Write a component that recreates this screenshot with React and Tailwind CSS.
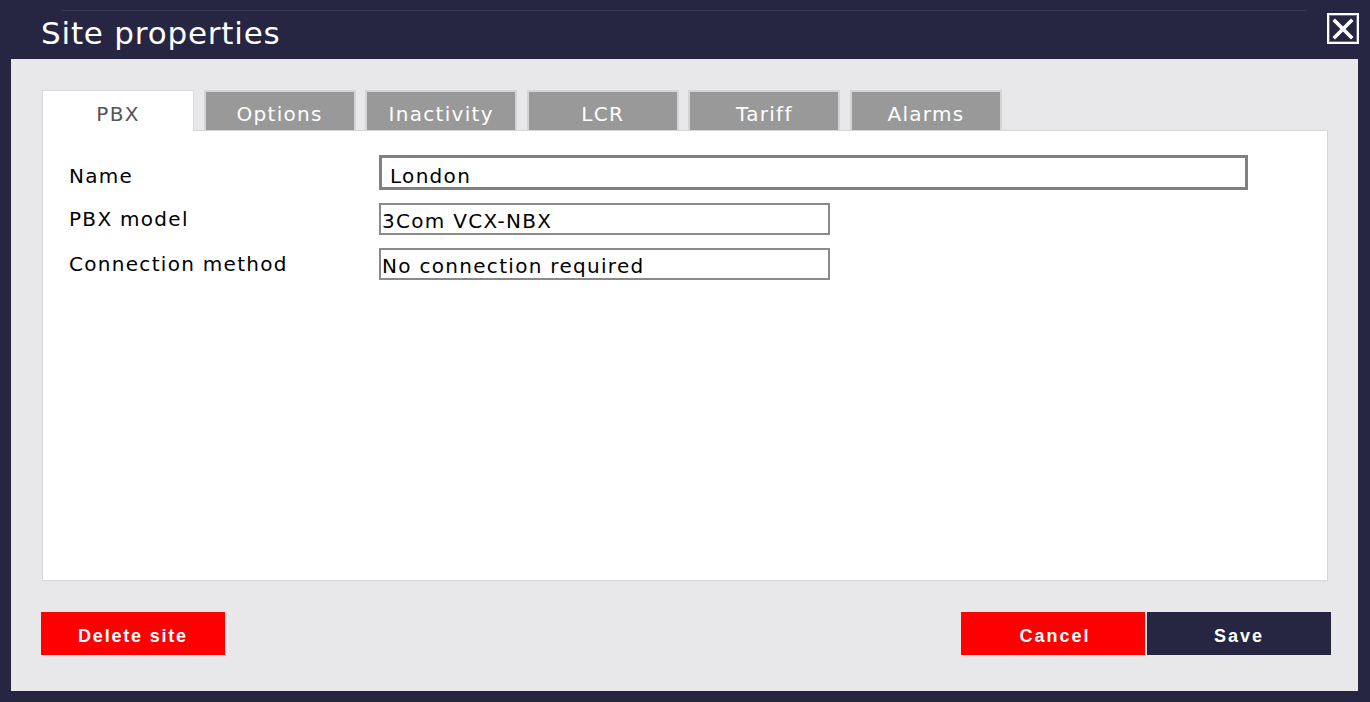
import React from "react";

const font = { fontFamily: '"DejaVu Sans", Verdana, sans-serif' };
const btnFont = { fontFamily: '"Liberation Sans", Arial, sans-serif' };

function Tab({ label, active }) {
  if (active) {
    return (
      <div className="w-[152px] h-[41px] bg-white border border-b-0 border-[#d9d9d9] flex items-center justify-center text-[20px] tracking-[1.3px] text-[#555] relative z-10 -mb-px pt-[5px]">
        {label}
      </div>
    );
  }
  return (
    <div className="w-[152px] h-[40px] bg-[#999999] border-2 border-b-0 border-[#d4d4d4] flex items-center justify-center text-[20px] tracking-[1.3px] text-white pt-[5px]">
      {label}
    </div>
  );
}

export default function App() {
  const tabs = ["PBX", "Options", "Inactivity", "LCR", "Tariff", "Alarms"];
  return (
    <div className="w-[1370px] h-[702px] bg-[#262642] flex flex-col overflow-hidden" style={font}>
      {/* title bar */}
      <div className="h-[59px] relative flex items-center pl-[41px]">
        <div className="absolute left-[61px] right-[63px] top-[10px] h-px bg-[#3b3b5a]" />
        <span className="text-white text-[31px] tracking-[0.8px] leading-none mt-[8px]">Site properties</span>
        <div className="absolute right-[11px] top-[13px] w-[32px] h-[31px] border-2 border-white bg-[#262642] flex items-center justify-center">
          <div className="absolute inset-0 border border-[#6a6a80]" />
          <svg width="24" height="24" viewBox="0 0 24 24" className="relative">
            <path d="M4 4 L20 20 M20 4 L4 20" stroke="white" strokeWidth="3.6" strokeLinecap="square" />
          </svg>
        </div>
      </div>

      {/* body */}
      <div className="ml-[11px] mr-[12px] h-[632px] bg-[#e8e8ea] pt-[31px] pl-[31px] pr-[30px] flex flex-col">
        <div className="flex gap-[9.6px] items-end h-[40px]">
          {tabs.map((t, i) => (
            <Tab key={t} label={t} active={i === 0} />
          ))}
        </div>
        <div className="h-[451px] bg-white border border-[#d6d6d6] pl-[26px] pt-[24px]">
          <div className="grid grid-cols-[310px_1fr] gap-y-[13px] text-[20px] tracking-[1.3px] text-black">
            <div className="h-[35px] flex items-center pt-[6px]">Name</div>
            <div className="w-[869px] h-[35px] border-[3px] border-[#808080] flex items-center pl-[8px] pt-[6px]">London</div>
            <div className="h-[32px] flex items-center -mt-[3px] pt-[6px]">PBX model</div>
            <div className="w-[451px] h-[32px] border-2 border-[#8a8a8a] flex items-center pl-[1px] pt-[4px]">3Com VCX-NBX</div>
            <div className="h-[32px] flex items-center">Connection method</div>
            <div className="w-[451px] h-[32px] border-2 border-[#8a8a8a] flex items-center pl-[1px] pt-[3px]">No connection required</div>
          </div>
        </div>
        <div className="flex mt-[31px] h-[43px]" style={btnFont}>
          <div className="w-[184px] h-[43px] bg-[#ff0000] -ml-px flex items-center justify-center text-white font-bold text-[18px] tracking-[1.8px] pt-[6px]">
            Delete site
          </div>
          <div className="flex-1" />
          <div className="w-[184px] h-[43px] bg-[#ff0000] flex items-center justify-center text-white font-bold text-[18px] tracking-[2px] pt-[6px] pl-[4px]">
            Cancel
          </div>
          <div className="w-[184px] h-[43px] bg-[#262642] ml-[2px] -mr-[3px] flex items-center justify-center text-white font-bold text-[18px] tracking-[2px] pt-[6px]">
            Save
          </div>
        </div>
      </div>
    </div>
  );
}
